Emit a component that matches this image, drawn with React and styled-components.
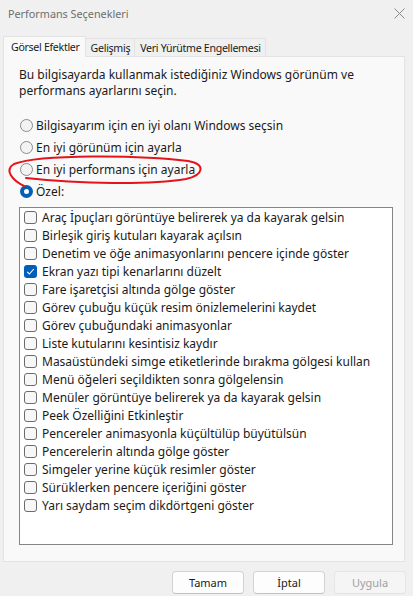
import React from "react";
import styled, { createGlobalStyle } from "styled-components";

const Global = createGlobalStyle`
  body {
    margin: 0;
    background: #f0f0f0;
    font-family: "Noto Sans", "Open Sans", sans-serif;
    font-size: 12px;
    color: #1a1a1a;
  }
`;

const Window = styled.div`
  position: relative;
  width: 413px;
  height: 596px;
  background: #f0f0f0;
  display: flex;
  flex-direction: column;
  overflow: hidden;
`;

const TitleBar = styled.div`
  height: 27px;
  display: flex;
  align-items: center;
  justify-content: space-between;
  padding: 0 8px 0 8px;
  color: #6e6e6e;
  font-size: 10.8px;
`;

const TabStrip = styled.div`
  display: flex;
  align-items: flex-end;
  margin: 8px 0 0 3px;
  height: 21px;
  font-size: 10.6px;
  letter-spacing: -0.3px;
`;

const Tab = styled.div`
  height: ${(p) => (p.active ? "21px" : "18px")};
  padding: ${(p) => (p.active ? "0 5px 0 7px" : "0 4px 0 5px")};
  display: flex;
  align-items: center;
  background: ${(p) => (p.active ? "#f9f9f9" : "#f0f0f0")};
  border: 1px solid #e3e3e3;
  border-bottom: none;
  border-left: ${(p) => (p.first ? "1px solid #e3e3e3" : "none")};
  box-sizing: border-box;
  position: relative;
  top: ${(p) => (p.active ? "1px" : "0")};
  z-index: ${(p) => (p.active ? 1 : 0)};
`;

const Panel = styled.div`
  margin: 0 8px 0 3px;
  height: 506px;
  box-sizing: border-box;
  background: #f9f9f9;
  border: 1px solid #e3e3e3;
  padding: 10px 0 0 15px;
`;

const Intro = styled.p`
  margin: 0;
  line-height: 16px;
  width: 340px;
`;

const RadioGroup = styled.div`
  margin-top: 15px;
  display: flex;
  flex-direction: column;
`;

const RadioRow = styled.label`
  height: 22px;
  display: flex;
  align-items: center;
  gap: 3px;
  margin-left: 1px;
`;

const RadioDot = styled.span`
  width: 13px;
  height: 13px;
  border-radius: 50%;
  box-sizing: border-box;
  border: ${(p) => (p.on ? "none" : "1px solid #8a8a8a")};
  background: ${(p) => (p.on ? "#005fb8" : "#f3f3f3")};
  display: flex;
  align-items: center;
  justify-content: center;
  &::after {
    content: "";
    display: ${(p) => (p.on ? "block" : "none")};
    width: 5px;
    height: 5px;
    border-radius: 50%;
    background: #fff;
  }
`;

const ListBox = styled.div`
  margin-top: 5px;
  width: 374px;
  height: 338px;
  box-sizing: border-box;
  background: #fff;
  border: 1px solid #858585;
  padding-top: 0;
`;

const CheckRow = styled.label`
  height: 18.05px;
  display: flex;
  align-items: center;
  gap: 5px;
  padding-left: 4px;
  white-space: nowrap;
`;

const Box = styled.span`
  width: 13px;
  height: 13px;
  flex: none;
  box-sizing: border-box;
  border-radius: 3px;
  border: ${(p) => (p.on ? "none" : "1px solid #6b6b6b")};
  background: ${(p) => (p.on ? "#005fb8" : "#f7f7f7")};
  display: flex;
  align-items: center;
  justify-content: center;
`;

const Footer = styled.div`
  display: flex;
  justify-content: flex-end;
  gap: 9px;
  padding: 9px 7px 0 0;
`;

const Button = styled.button`
  width: 72px;
  height: 23px;
  box-sizing: border-box;
  border: 1px solid ${(p) => (p.disabled ? "#e6e6e6" : "#d3d3d3")};
  border-bottom-color: ${(p) => (p.disabled ? "#e3e3e3" : "#c2c2c2")};
  border-radius: 4px;
  background: ${(p) => (p.disabled ? "#f5f5f5" : "#fdfdfd")};
  color: ${(p) => (p.disabled ? "#a0a0a0" : "#1a1a1a")};
  font-family: inherit;
  font-size: 11px;
  padding: 0;
`;

const Scribble = styled.svg`
  position: absolute;
  left: 0;
  top: 150px;
  pointer-events: none;
`;

const radios = [
  { label: "Bilgisayarım için en iyi olanı Windows seçsin" },
  { label: "En iyi görünüm için ayarla" },
  { label: "En iyi performans için ayarla" },
  { label: "Özel:", on: true },
];

const effects = [
  "Araç İpuçları görüntüye belirerek ya da kayarak gelsin",
  "Birleşik giriş kutuları kayarak açılsın",
  "Denetim ve öğe animasyonlarını pencere içinde göster",
  "Ekran yazı tipi kenarlarını düzelt",
  "Fare işaretçisi altında gölge göster",
  "Görev çubuğu küçük resim önizlemelerini kaydet",
  "Görev çubuğundaki animasyonlar",
  "Liste kutularını kesintisiz kaydır",
  "Masaüstündeki simge etiketlerinde bırakma gölgesi kullan",
  "Menü öğeleri seçildikten sonra gölgelensin",
  "Menüler görüntüye belirerek ya da kayarak gelsin",
  "Peek Özelliğini Etkinleştir",
  "Pencereler animasyonla küçültülüp büyütülsün",
  "Pencerelerin altında gölge göster",
  "Simgeler yerine küçük resimler göster",
  "Sürüklerken pencere içeriğini göster",
  "Yarı saydam seçim dikdörtgeni göster",
];

const CloseIcon = () => (
  <svg width="11" height="11" viewBox="0 0 11 11">
    <path d="M0.5 0.5 L10.5 10.5 M10.5 0.5 L0.5 10.5" stroke="#8a8a8a" strokeWidth="1" />
  </svg>
);

const Tick = () => (
  <svg width="9" height="9" viewBox="0 0 9 9">
    <path d="M1.2 4.8 L3.4 7 L7.8 2" fill="none" stroke="#fff" strokeWidth="1.1" />
  </svg>
);

export default function App() {
  return (
    <Window>
      <Global />
      <TitleBar>
        <span>Performans Seçenekleri</span>
        <CloseIcon />
      </TitleBar>
      <TabStrip>
        <Tab active first>Görsel Efektler</Tab>
        <Tab>Gelişmiş</Tab>
        <Tab>Veri Yürütme Engellemesi</Tab>
      </TabStrip>
      <Panel>
        <Intro>
          Bu bilgisayarda kullanmak istediğiniz Windows görünüm ve performans
          ayarlarını seçin.
        </Intro>
        <RadioGroup>
          {radios.map((r) => (
            <RadioRow key={r.label}>
              <RadioDot on={r.on} />
              {r.label}
            </RadioRow>
          ))}
        </RadioGroup>
        <ListBox>
          {effects.map((e, i) => (
            <CheckRow key={e}>
              <Box on={i === 3}>{i === 3 && <Tick />}</Box>
              {e}
            </CheckRow>
          ))}
        </ListBox>
      </Panel>
      <Footer>
        <Button>Tamam</Button>
        <Button>İptal</Button>
        <Button disabled>Uygula</Button>
      </Footer>
      <Scribble width="220" height="45" viewBox="0 150 220 45">
        <path
          d="M24 186 C12 180 4 170 14 164 C40 154 140 155 188 161 C206 164 204 175 186 179 C150 185 80 184 26 178"
          fill="none"
          stroke="#e3141c"
          strokeWidth="2"
          strokeLinecap="round"
        />
      </Scribble>
    </Window>
  );
}
